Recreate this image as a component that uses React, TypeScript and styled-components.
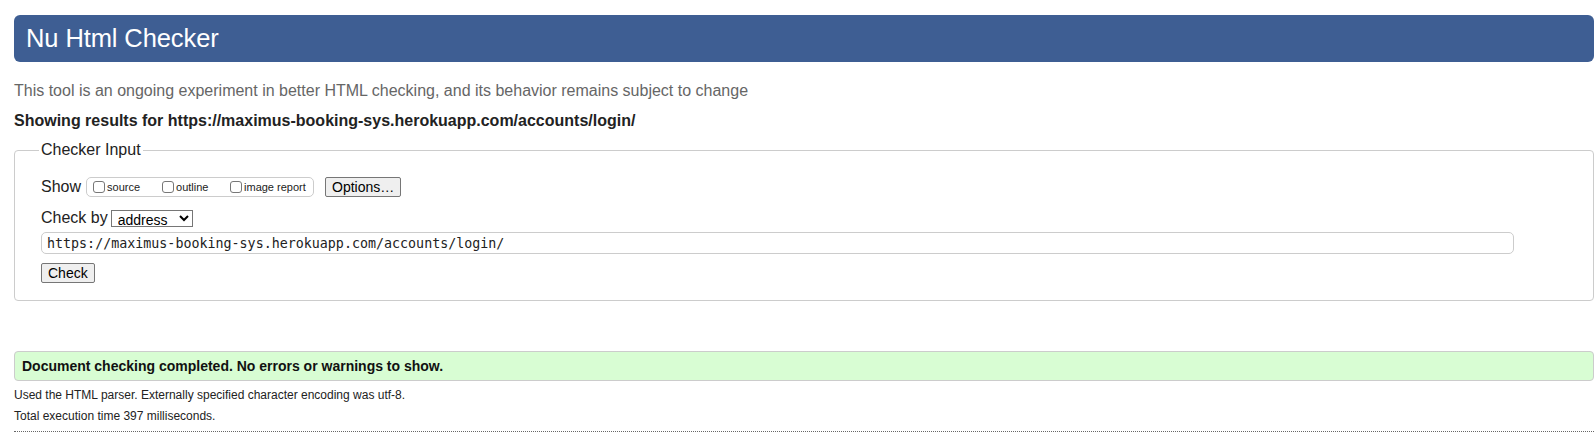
import React from "react";
import styled, { createGlobalStyle } from "styled-components";

const Global = createGlobalStyle`
  html, body { margin: 0; padding: 0; background: #fff; }
  body { font-family: "Liberation Sans", Arial, sans-serif; color: #222; }
`;

const Page = styled.div`
  padding: 15px 2px 0 14px;
`;

const Header = styled.h1`
  margin: 0;
  height: 47px;
  box-sizing: border-box;
  background: #3e5e93;
  color: #fff;
  border-radius: 6px;
  font-weight: normal;
  font-size: 25.5px;
  line-height: 47px;
  padding: 0 12px;
  letter-spacing: -0.1px;
`;

const Subtitle = styled.p`
  margin: 20px 0 0;
  font-size: 16px;
  line-height: 18px;
  color: #666;
`;

const Results = styled.p`
  margin: 12px 0 0;
  font-size: 16px;
  line-height: 18px;
  font-weight: bold;
  color: #222;
`;

const Fieldset = styled.fieldset`
  margin: 11px 0 0;
  border: 1px solid #ccc;
  border-radius: 4px;
  padding: 18px 26px 17px;
  display: flex;
  flex-direction: column;
  align-items: flex-start;
`;

const Legend = styled.legend`
  font-size: 16px;
  line-height: 18px;
  padding: 0 2px;
  margin-left: -2px;
  color: #222;
`;

const Row = styled.div<{ $mt?: number }>`
  display: flex;
  align-items: center;
  margin-top: ${(p) => p.$mt ?? 0}px;
  font-size: 16px;
  color: #222;
`;

const ShowBox = styled.div`
  display: flex;
  align-items: center;
  height: 18px;
  margin-left: 5px;
  padding: 0 5px 0 6px;
  border: 1px solid #ccc;
  border-radius: 5px;
`;

const CheckLabel = styled.label<{ $w: number }>`
  display: flex;
  align-items: center;
  width: ${(p) => p.$w}px;
  font-size: 11px;
  color: #222;
`;

const Box = styled.input`
  appearance: none;
  margin: 0 2px 0 0;
  width: 12px;
  height: 12px;
  border: 1px solid #777;
  border-radius: 3px;
  background: #fff;
  box-sizing: border-box;
`;

const Button = styled.button<{ $ml?: number; $mt?: number }>`
  font-family: "Liberation Sans", Arial, sans-serif;
  font-size: 14px;
  height: 20px;
  line-height: 16px;
  padding: 0 6px;
  margin-left: ${(p) => p.$ml ?? 0}px;
  margin-top: ${(p) => p.$mt ?? 0}px;
  background: #efefef;
  border: 1px solid #767676;
  border-radius: 2px;
  color: #000;
`;

const Select = styled.select`
  font-family: "Liberation Sans", Arial, sans-serif;
  font-size: 14px;
  height: 17px;
  width: 82px;
  margin-left: 3px;
  padding: 0 0 0 2px;
  border: 1px solid #767676;
  border-radius: 0;
  background: #fff;
  color: #000;
`;

const UrlInput = styled.input`
  margin-top: 5px;
  box-sizing: border-box;
  width: 1473px;
  height: 22px;
  padding: 0 5px;
  border: 1px solid #ccc;
  border-radius: 5px;
  font-family: "DejaVu Sans Mono", monospace;
  font-size: 13.33px;
  color: #222;
  outline: none;
`;

const Success = styled.div`
  margin-top: 50px;
  height: 30px;
  box-sizing: border-box;
  background: #d8fdd3;
  border: 1px solid #ccc;
  border-radius: 4px;
  padding: 0 7px;
  display: flex;
  align-items: center;
  font-size: 14px;
  font-weight: bold;
  color: #111;
`;

const Detail = styled.p<{ $mt: number }>`
  margin: ${(p) => p.$mt}px 0 0;
  font-size: 12px;
  line-height: 14px;
  color: #222;
`;

const Rule = styled.hr`
  margin: 8px 0 0;
  border: 0;
  border-top: 1px dotted #666;
  height: 0;
`;

export default function App() {
  return (
    <>
      <Global />
      <Page>
        <Header>Nu Html Checker</Header>
        <Subtitle>
          This tool is an ongoing experiment in better HTML checking, and its behavior remains subject to change
        </Subtitle>
        <Results>Showing results for https://maximus-booking-sys.herokuapp.com/accounts/login/</Results>
        <Fieldset>
          <Legend>Checker Input</Legend>
          <Row>
            Show
            <ShowBox>
              <CheckLabel $w={69}>
                <Box type="checkbox" />
                source
              </CheckLabel>
              <CheckLabel $w={68}>
                <Box type="checkbox" />
                outline
              </CheckLabel>
              <CheckLabel $w={78}>
                <Box type="checkbox" />
                image report
              </CheckLabel>
            </ShowBox>
            <Button $ml={11}>Options…</Button>
          </Row>
          <Row $mt={12}>
            Check by
            <Select defaultValue="address">
              <option value="address">address</option>
              <option value="file">file upload</option>
              <option value="text">text input</option>
            </Select>
          </Row>
          <UrlInput defaultValue="https://maximus-booking-sys.herokuapp.com/accounts/login/" />
          <Button $mt={9}>Check</Button>
        </Fieldset>
        <Success>Document checking completed. No errors or warnings to show.</Success>
        <Detail $mt={7}>Used the HTML parser. Externally specified character encoding was utf-8.</Detail>
        <Detail $mt={7}>Total execution time 397 milliseconds.</Detail>
        <Rule />
      </Page>
    </>
  );
}
